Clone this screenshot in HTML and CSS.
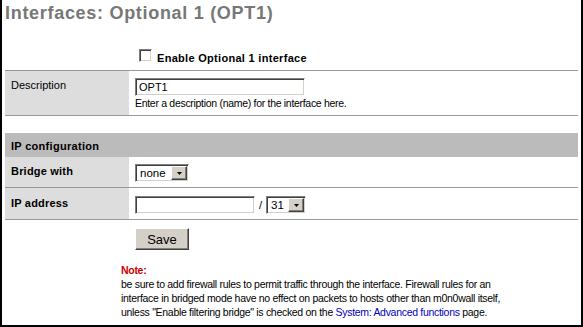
FILE: index.html
```html
<!DOCTYPE html>
<html>
  <head>
    <title>Interfaces: Optional 1 (OPT1)</title>
    <link rel="stylesheet" href="styles.css">
  </head>
  <body>
    <p class="pgtitle">Interfaces: Optional 1 (OPT1)</p>

    <form class="vtable" id="iform">
      <div class="row enable-row">
        <div class="blank"></div>
        <div class="vtable-cell">
          <label class="check">
            <input type="checkbox" name="enable" />
            <span>Enable Optional 1 interface</span>
          </label>
        </div>
      </div>

      <div class="row">
        <div class="vncell">Description</div>
        <div class="vtable-cell">
          <input type="text" class="formfld descr" name="descr" value="OPT1" />
          <div class="vexpl">Enter a description (name) for the interface here.</div>
        </div>
      </div>

      <div class="spacer"></div>

      <div class="listtopic">IP configuration</div>

      <div class="row">
        <div class="vncell vncellreq">Bridge with</div>
        <div class="vtable-cell">
          <span class="combo">
            <select name="bridge" class="wide">
              <option>none</option>
            </select>
            <span class="drop"><svg width="5" height="3" viewBox="0 0 5 3"><polygon points="0,0 5,0 2.5,3" fill="#000" /></svg></span>
          </span>
        </div>
      </div>

      <div class="row ip-row">
        <div class="vncell vncellreq">IP address</div>
        <div class="vtable-cell">
          <div class="ipline">
            <input type="text" class="formfld ipaddr" name="ipaddr" />
            <span>/</span>
            <span class="combo">
              <select name="subnet" class="narrow">
                <option>31</option>
              </select>
              <span class="drop"><svg width="5" height="3" viewBox="0 0 5 3"><polygon points="0,0 5,0 2.5,3" fill="#000" /></svg></span>
            </span>
          </div>
        </div>
      </div>

      <div class="save-row">
        <input type="submit" class="formbtn" value="Save" />
      </div>

      <p class="note">
        <strong class="red">Note:</strong><br />
        be sure to add firewall rules to permit traffic through the interface. Firewall rules for an interface in bridged mode have no effect on packets to hosts other than m0n0wall itself, unless "Enable filtering bridge" is checked on the <a href="#">System: Advanced functions</a> page.
      </p>
    </form>
  </body>
</html>
```

FILE: styles.css
```css
body {
  margin: 0;
  height: 327px;
  box-sizing: border-box;
  padding: 0 3px;
  border: 2px solid #000;
  border-top: none;
  background: #fff;
  color: #000;
  font-family: "Liberation Sans", Arial, sans-serif;
  font-size: 11px;
  line-height: 14px;
}
.pgtitle {
  margin: 0;
  padding-top: 2px;
  font-size: 18px;
  line-height: 22px;
  font-weight: bold;
  letter-spacing: 0.7px;
  color: #777;
}
.row {
  display: grid;
  grid-template-columns: 124px 1fr;
  border-bottom: 1px solid #999;
}
.vncell,
.vtable-cell {
  padding: 7px 6px 5px;
}
.vncell {
  background-color: #ddd;
}
.vncellreq {
  font-weight: bold;
  letter-spacing: 0.2px;
}
.enable-row .vtable-cell {
  padding: 26px 6px 4px;
}
.ip-row .vncell,
.ip-row .vtable-cell {
  padding-top: 8px;
}
.check {
  display: flex;
  gap: 5px;
  line-height: 16px;
  font-weight: bold;
  letter-spacing: 0.3px;
}
.check input {
  appearance: none;
  width: 13px;
  height: 13px;
  margin: -1px 0 0 4px;
  box-sizing: border-box;
  border: 1px solid;
  border-color: #808080 #fff #fff #808080;
  box-shadow: inset 1px 1px #404040, inset -1px -1px #d4d0c8;
  background: #fff;
}
.formfld {
  display: block;
  box-sizing: border-box;
  height: 18px;
  margin: 0;
  padding: 0 3px;
  border: 1px solid;
  border-color: #808080 #fff #fff #808080;
  box-shadow: inset 1px 1px #404040, inset -1px -1px #d4d0c8;
  font-family: "Liberation Sans", Arial, sans-serif;
  font-size: 11px;
  color: #000;
  outline: none;
}
.descr {
  width: 170px;
}
.ipaddr {
  width: 120px;
}
.ipline {
  display: flex;
  align-items: center;
  gap: 4px;
}
.vexpl,
.note {
  font-size: 10.5px;
  letter-spacing: -0.3px;
}
.spacer {
  height: 17px;
}
.listtopic {
  padding: 6px 6px 4px;
  background-color: #bbb;
  font-weight: bold;
  letter-spacing: 0.3px;
}
.combo {
  display: inline-flex;
  box-sizing: border-box;
  height: 18px;
  padding: 1px;
  border: 1px solid;
  border-color: #808080 #fff #fff #808080;
  box-shadow: inset 1px 1px #404040, inset -1px -1px #d4d0c8;
  background: #fff;
  vertical-align: top;
}
.combo select {
  appearance: none;
  height: 14px;
  margin: 0;
  padding: 0 0 0 3px;
  border: none;
  background: transparent;
  font-family: "Liberation Sans", Arial, sans-serif;
  font-size: 11.5px;
  line-height: 14px;
  color: #000;
  outline: none;
}
.combo select.wide {
  width: 34px;
}
.combo select.narrow {
  width: 20px;
}
.drop {
  display: flex;
  align-items: center;
  justify-content: center;
  box-sizing: border-box;
  width: 16px;
  height: 14px;
  border: 1px solid;
  border-color: #fff #404040 #404040 #fff;
  box-shadow: inset -1px -1px #808080;
  background: #d4d0c8;
}
.save-row {
  padding: 8px 0 6px 130px;
}
.formbtn {
  display: block;
  width: 54px;
  height: 22px;
  margin: 0;
  padding: 0;
  border: 1px solid;
  border-color: #fff #404040 #404040 #fff;
  box-shadow: inset -1px -1px #808080;
  background: #d4d0c8;
  font-family: "Liberation Sans", Arial, sans-serif;
  font-size: 13px;
  color: #000;
}
.note {
  width: 395px;
  margin: 0;
  padding: 7px 0 0 116px;
}
.red {
  color: #c00;
}
.note a {
  color: #00b;
  text-decoration: none;
}
```
